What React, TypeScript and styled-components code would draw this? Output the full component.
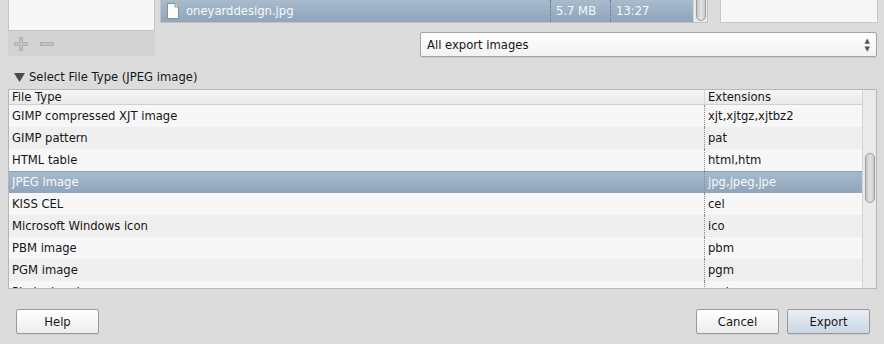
import React from "react";
import styled, {createGlobalStyle, css} from "styled-components";

const GlobalStyle = createGlobalStyle`
    html, body {
        margin: 0;
        padding: 0;
        background: #dcdcdc;
        font-family: "DejaVu Sans", "Liberation Sans", sans-serif;
        font-size: 11.6px;
        color: #161616;
    }
    * {
        box-sizing: border-box;
    }
`;

const Dialog = styled.div`
    width: 884px;
    height: 344px;
    padding: 0 6px 0 8px;
    display: flex;
    flex-direction: column;
    overflow: hidden;
    background: #dcdcdc;
`;

const Top = styled.div`
    display: grid;
    grid-template-columns: 147px 548px 165px;
    grid-template-rows: 23px 25px;
    column-gap: 5px;
    row-gap: 9px;
    height: 57px;
`;

const Places = styled.div`
    grid-row: 1 / span 2;
    display: flex;
    flex-direction: column;
`;

const PlacesList = styled.div`
    height: 31px;
    background: #f7f7f7;
    border: 1px solid #c6c6c6;
    border-top: none;
`;

const PlacesBar = styled.div`
    height: 25px;
    background: #d3d3d3;
    display: flex;
    align-items: center;
    gap: 12px;
    padding-left: 6px;
`;

const FileList = styled.div`
    display: flex;
    border: 1px solid #c2c2c2;
    border-top: none;
    background: #f7f7f7;
`;

const selected = css`
    background: linear-gradient(#a9bbcd, #8fa5bb);
    color: #f6f8fa;
`;

const FileRow = styled.div`
    flex: 1;
    display: flex;
    align-items: center;
    ${selected};
`;

const FileName = styled.div`
    flex: 1;
    display: flex;
    align-items: center;
    gap: 7px;
    padding-left: 6px;
    font-size: 11.6px;
`;

const FileCell = styled.div<{ $w: number }>`
    width: ${p => p.$w}px;
    height: 100%;
    display: flex;
    align-items: center;
    padding-left: 5px;
    border-left: 1px dotted #5d7188;
    font-size: 11.6px;
`;

const VScroll = styled.div`
    width: 14px;
    background: #eaeaea;
    border-left: 1px solid #d5d5d5;
    display: flex;
    justify-content: center;
`;

const Thumb = styled.div<{ $top: number; $h: number }>`
    margin-top: ${p => p.$top}px;
    width: 10px;
    height: ${p => p.$h}px;
    border: 1px solid #9e9e9e;
    border-radius: 5px;
    background: linear-gradient(90deg, #c4c4c4, #e4e4e4 50%, #c8c8c8);
`;

const Preview = styled.div`
    background: #f6f6f6;
    border: 1px solid #c8c8c8;
    border-top: none;
    margin-left: 7px;
`;

const Select = styled.div`
    grid-column: 2 / span 2;
    justify-self: end;
    width: 457px;
    margin-right: 1px;
    height: 25px;
    background: linear-gradient(#ffffff, #f2f2f2);
    border: 1px solid #a3a3a3;
    border-radius: 2px;
    display: flex;
    align-items: center;
    padding: 0 6px;
    font-size: 11.6px;
    box-shadow: 0 1px 0 rgba(0, 0, 0, 0.08);
`;

const SelectLabel = styled.span`
    flex: 1;
`;

const Arrows = styled.div`
    display: flex;
    flex-direction: column;
    font-size: 7px;
    line-height: 8px;
    color: #555;
`;

const Expander = styled.div`
    margin-top: 12px;
    height: 16px;
    display: flex;
    align-items: center;
    gap: 4px;
    padding-left: 6px;
    font-size: 11.6px;
`;

const Table = styled.div`
    margin-top: 4px;
    height: 200px;
    border: 1px solid #b6b6b6;
    background: #f7f7f7;
    display: flex;
    margin-right: 1px;
`;

const TableBody = styled.div`
    flex: 1;
    overflow: hidden;
`;

const cols = css`
    display: grid;
    grid-template-columns: 695px 1fr;
`;

const Head = styled.div`
    ${cols};
    height: 15px;
    background: linear-gradient(#f6f6f6, #e9e9e9);
    border-bottom: 1px solid #d0d0d0;
`;

const HeadCell = styled.div<{ $sep?: boolean }>`
    padding-left: 3px;
    line-height: 15px;
    font-size: 11.6px;
    border-left: ${p => p.$sep ? "1px solid #d6d6d6" : "none"};
`;

const Row = styled.div<{ $odd: boolean; $sel: boolean }>`
    ${cols};
    height: 22px;
    background: ${p => p.$odd ? "#efefef" : "#f7f7f7"};
    ${p => p.$sel && css`
        ${selected};
        box-shadow: inset 0 1px 0 #8aa0b6;
    `};
`;

const Cell = styled.div<{ $sep?: boolean }>`
    display: flex;
    align-items: center;
    padding-left: 3px;
    font-size: 11.6px;
    border-left: ${p => p.$sep ? "1px dotted #8a8a8a" : "none"};
`;

const Footer = styled.div`
    margin-top: 20px;
    display: flex;
    align-items: center;
    padding: 0 8px 0 8px;
`;

const Button = styled.button<{ $primary?: boolean }>`
    width: 83px;
    height: 25px;
    font-family: inherit;
    font-size: 11.6px;
    color: #161616;
    border: 1px solid #999;
    border-radius: 2px;
    background: ${p => p.$primary
        ? "linear-gradient(#e9eff5, #cad7e4)"
        : "linear-gradient(#ffffff, #ececec)"};
    box-shadow: 0 1px 0 rgba(0, 0, 0, 0.06);
    padding: 0;
`;

const Spacer = styled.div`
    flex: 1;
`;

const ButtonGap = styled.div`
    width: 8px;
`;

const types = [
    ["GIMP compressed XJT image", "xjt,xjtgz,xjtbz2"],
    ["GIMP pattern", "pat"],
    ["HTML table", "html,htm"],
    ["JPEG image", "jpg,jpeg,jpe"],
    ["KISS CEL", "cel"],
    ["Microsoft Windows icon", "ico"],
    ["PBM image", "pbm"],
    ["PGM image", "pgm"],
    ["Photoshop image", "psd"],
];

function PlusIcon() {
    return (
        <svg width="14" height="14" viewBox="0 0 14 14">
            <path d="M5.5 0.5h3v5h5v3h-5v5h-3v-5h-5v-3h5z" fill="#c2c2c2" stroke="#b0b0b0"/>
        </svg>
    );
}

function MinusIcon() {
    return (
        <svg width="14" height="14" viewBox="0 0 14 14">
            <rect x="0.5" y="5.5" width="13" height="3" fill="#c2c2c2" stroke="#b0b0b0"/>
        </svg>
    );
}

function FileIcon() {
    return (
        <svg width="12" height="16" viewBox="0 0 12 16">
            <path d="M0.5 0.5h7.5l3.5 3.5v11.5h-11z" fill="#fbfbfb" stroke="#8d8d8d"/>
            <path d="M8 0.5v3.5h3.5" fill="#e6e6e6" stroke="#8d8d8d"/>
        </svg>
    );
}

function Triangle() {
    return (
        <svg width="11" height="10" viewBox="0 0 11 10">
            <path d="M0 1h11l-5.5 9z" fill="#4a4a4a"/>
        </svg>
    );
}

export default function App() {
    return (
        <Dialog>
            <GlobalStyle/>
            <Top>
                <Places>
                    <PlacesList/>
                    <PlacesBar>
                        <PlusIcon/>
                        <MinusIcon/>
                    </PlacesBar>
                </Places>
                <FileList>
                    <FileRow>
                        <FileName>
                            <FileIcon/>
                            oneyarddesign.jpg
                        </FileName>
                        <FileCell $w={60}>5.7 MB</FileCell>
                        <FileCell $w={83}>13:27</FileCell>
                    </FileRow>
                    <VScroll>
                        <Thumb $top={-6} $h={27}/>
                    </VScroll>
                </FileList>
                <Preview/>
                <Select>
                    <SelectLabel>All export images</SelectLabel>
                    <Arrows>
                        <span>▲</span>
                        <span>▼</span>
                    </Arrows>
                </Select>
            </Top>
            <Expander>
                <Triangle/>
                Select File Type (JPEG image)
            </Expander>
            <Table>
                <TableBody>
                    <Head>
                        <HeadCell>File Type</HeadCell>
                        <HeadCell $sep>Extensions</HeadCell>
                    </Head>
                    {types.map(([name, ext], i) => (
                        <Row key={name} $odd={i % 2 === 1} $sel={i === 3}>
                            <Cell>{name}</Cell>
                            <Cell $sep>{ext}</Cell>
                        </Row>
                    ))}
                </TableBody>
                <VScroll>
                    <Thumb $top={63} $h={50}/>
                </VScroll>
            </Table>
            <Footer>
                <Button>Help</Button>
                <Spacer/>
                <Button>Cancel</Button>
                <ButtonGap/>
                <Button $primary>Export</Button>
            </Footer>
        </Dialog>
    );
}
